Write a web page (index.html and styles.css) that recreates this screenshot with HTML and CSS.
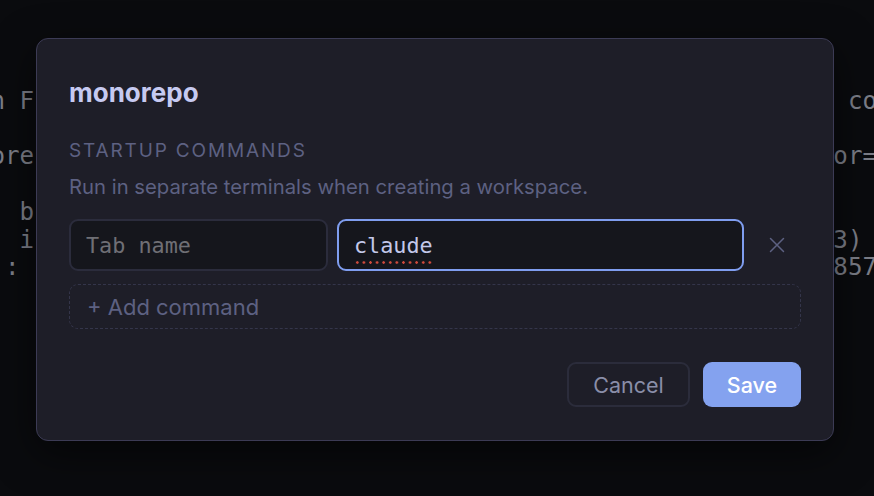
FILE: index.html
```html
<!DOCTYPE html>
<html lang="en">
<head>
<meta charset="utf-8">
<title>monorepo</title>
<link rel="stylesheet" href="styles.css">
</head>
<body>
<div class="terminal">
<pre class="term-col term-left">n F

ore

  b
  i
 :</pre>
<pre class="term-col term-right"> co

or=1

 
3)
857</pre>
</div>

<div class="dialog" role="dialog" aria-labelledby="dlg-title">
  <h2 class="dialog-title" id="dlg-title">monorepo</h2>
  <div class="section-label">STARTUP COMMANDS</div>
  <p class="section-desc">Run in separate terminals when creating a workspace.</p>

  <div class="cmd-row">
    <input class="field field-name" type="text" placeholder="Tab name">
    <div class="field field-cmd is-focused" role="textbox" contenteditable="true" spellcheck="false"><span class="misspelled">claude</span></div>
    <button class="remove-btn" type="button" aria-label="Remove command">
      <svg width="18" height="18" viewBox="0 0 18 18" fill="none" stroke="currentColor" stroke-width="1.5" stroke-linecap="round">
        <path d="M2.5 2.5 L15.5 15.5 M15.5 2.5 L2.5 15.5"/>
      </svg>
    </button>
  </div>

  <button class="add-cmd" type="button">+ Add command</button>

  <div class="dialog-footer">
    <button class="btn btn-cancel" type="button">Cancel</button>
    <button class="btn btn-save" type="button">Save</button>
  </div>
</div>
</body>
</html>
```

FILE: styles.css
```css
* { box-sizing: border-box; }

html, body {
  margin: 0;
  padding: 0;
  height: 100%;
}

body {
  background: #0a0b0e;
  overflow: hidden;
  position: relative;
  font-family: Inter, "Noto Sans", sans-serif;
}

.terminal {
  display: grid;
  grid-template-columns: 58ch auto;
  font-family: "DejaVu Sans Mono", monospace;
  font-size: 24.15px;
  line-height: 27.7px;
  color: #7c7e88;
  padding-top: 88px;
  margin-left: -9.6px;
}

.term-col {
  margin: 0;
  font: inherit;
  white-space: pre;
}

.dialog {
  position: absolute;
  left: 36px;
  top: 38px;
  width: 798px;
  background: #1e1e28;
  border: 1px solid #3c3b55;
  border-radius: 12px;
  padding: 38px 32px 33px;
  box-shadow: 0 12px 40px rgba(0, 0, 0, 0.55);
}

.dialog-title {
  margin: 0;
  font-size: 26px;
  line-height: 32px;
  font-weight: 700;
  color: #c6caf1;
}

.section-label {
  margin-top: 30px;
  font-size: 19px;
  line-height: 24px;
  letter-spacing: 1.85px;
  color: #5d6182;
}

.section-desc {
  margin: 11px 0 0;
  font-size: 20.3px;
  line-height: 26px;
  color: #5d6182;
}

.cmd-row {
  margin-top: 19px;
  display: flex;
  gap: 9px;
  height: 52px;
}

.field {
  height: 52px;
  border: 2px solid #2b2c3c;
  border-radius: 9px;
  background: #15161c;
  padding: 0 15px;
  font-family: "DejaVu Sans Mono", monospace;
  font-size: 21.8px;
  color: #c3c8ea;
  outline: none;
}

.field::placeholder {
  color: #6f6f75;
}

.field-name {
  width: 259px;
  flex: none;
}

.field-cmd {
  flex: 1;
  min-width: 0;
  display: flex;
  align-items: center;
  padding-top: 1px;
}

.field.is-focused {
  border-color: #7f9def;
}

.misspelled {
  padding-bottom: 6px;
  margin-bottom: -6px;
  background-image: radial-gradient(circle, #cf4a3c 1.1px, transparent 1.5px);
  background-size: 6.6px 3px;
  background-repeat: repeat-x;
  background-position: 0 100%;
}

.remove-btn {
  width: 48px;
  flex: none;
  border: 0;
  background: transparent;
  color: #5d6182;
  display: flex;
  align-items: center;
  justify-content: center;
  padding: 0;
}

.add-cmd {
  display: block;
  width: 100%;
  margin-top: 13px;
  height: 45px;
  border: 1.5px dashed #34354a;
  border-radius: 9px;
  background: transparent;
  text-align: left;
  padding: 0 17px;
  font-family: inherit;
  font-size: 22px;
  color: #5d6182;
}

.dialog-footer {
  margin-top: 33px;
  display: flex;
  justify-content: flex-end;
  gap: 13px;
}

.btn {
  height: 45px;
  border-radius: 9px;
  font-family: inherit;
  font-size: 21.5px;
  padding: 0;
}

.btn-cancel {
  width: 123px;
  background: transparent;
  border: 2px solid #2b2c3b;
  color: #8a8ea8;
}

.btn-save {
  width: 98px;
  background: #84a2ef;
  border: 0;
  color: #ffffff;
  font-weight: 500;
}
```
